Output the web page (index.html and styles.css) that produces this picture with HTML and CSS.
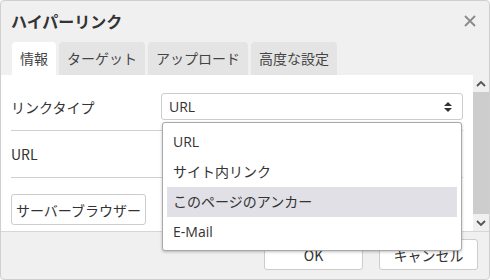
FILE: index.html
```html
<!DOCTYPE html>
<html lang="ja">
<head>
<meta charset="utf-8">
<link rel="stylesheet" href="styles.css">
</head>
<body>
<div class="dialog">
  <div class="header">
    <div class="title">ハイパーリンク</div>
    <svg class="close" width="12" height="12" viewBox="0 0 12 12"><path d="M1 1L11 11M11 1L1 11" stroke="#8a8a8a" stroke-width="1.8" fill="none"/></svg>
  </div>
  <div class="tabs">
    <div class="tab active">情報</div>
    <div class="tab">ターゲット</div>
    <div class="tab">アップロード</div>
    <div class="tab">高度な設定</div>
  </div>
  <div class="body">
    <div class="content">
      <div class="row row-first">
        <div class="label">リンクタイプ</div>
        <div class="select">
          <span>URL</span>
          <svg width="10" height="12" viewBox="0 0 10 12"><path d="M1 5L5 1L9 5Z M1 7L5 11L9 7Z" fill="#333"/></svg>
        </div>
      </div>
      <div class="row row-second">
        <div class="label">URL</div>
      </div>
      <div class="row row-third">
        <div class="btn">サーバーブラウザー</div>
      </div>
    </div>
    <div class="scrollbar">
      <div class="sb-arrow"><svg width="10" height="6" viewBox="0 0 10 6"><path d="M1 5L5 1L9 5" stroke="#555" stroke-width="1.8" fill="none"/></svg></div>
      <div class="sb-thumb"></div>
      <div class="sb-arrow"><svg width="10" height="6" viewBox="0 0 10 6"><path d="M1 1L5 5L9 1" stroke="#555" stroke-width="1.8" fill="none"/></svg></div>
    </div>
  </div>
  <div class="footer">
    <div class="btn fbtn">OK</div>
    <div class="btn fbtn">キャンセル</div>
  </div>
  <div class="dropdown">
    <div class="item">URL</div>
    <div class="item">サイト内リンク</div>
    <div class="item hl">このページのアンカー</div>
    <div class="item">E-Mail</div>
  </div>
</div>
</body>
</html>
```
FILE: styles.css
```css
* { box-sizing: border-box; }
html, body { margin: 0; padding: 0; }
body {
  font-family: "Open Sans", "Noto Sans CJK JP", sans-serif;
  font-size: 14px;
  color: #333;
  width: 490px;
  height: 280px;
  overflow: hidden;
}
.dialog {
  position: relative;
  width: 490px;
  height: 280px;
  background: #f0f0f0;
  border: 1px solid #cfcfcf;
  border-radius: 4px;
  display: flex;
  flex-direction: column;
  overflow: hidden;
}
.header {
  height: 41px;
  display: flex;
  align-items: center;
  justify-content: space-between;
  padding: 0 13px 2px 10px;
}
.title {
  font-weight: bold;
  font-size: 16px;
  color: #333;
  font-family: "Noto Sans CJK JP", sans-serif;
}
.tabs {
  display: flex;
  padding-left: 11px;
  gap: 3px;
  height: 33px;
}
.tab {
  height: 33px;
  line-height: 33px;
  padding: 0 8px;
  background: #e4e4e4;
  border-radius: 4px 4px 0 0;
  font-family: "Noto Sans CJK JP", sans-serif;
  color: #444;
}
.tab.active { background: #fff; padding: 0 8px; }
.body {
  display: flex;
  height: 157px;
  border-bottom: 1px solid #d6d6d6;
}
.content {
  width: 472px;
  background: #fff;
  padding: 0 10px;
  overflow: hidden;
}
.row {
  display: flex;
  align-items: center;
  border-bottom: 1px solid #d0d0d0;
}
.row-first { padding: 18px 0 10px; }
.row-second { height: 47px; }
.row-third { border-bottom: none; padding-top: 16px; }
.label {
  width: 150px;
  font-family: "Noto Sans CJK JP", sans-serif;
  color: #333;
}
.select {
  flex: 1;
  height: 27px;
  border: 1px solid #cccccc;
  border-radius: 3px;
  display: flex;
  align-items: center;
  justify-content: space-between;
  padding: 0 9px 0 7px;
}
.btn {
  height: 31px;
  border: 1px solid #cccccc;
  border-radius: 3px;
  background: #fff;
  display: flex;
  align-items: center;
  justify-content: center;
  padding: 0 4px;
  font-family: "Noto Sans CJK JP", sans-serif;
  color: #333;
}
.scrollbar {
  width: 16px;
  display: flex;
  flex-direction: column;
  background: #f0f0f0;
}
.sb-arrow {
  height: 17px;
  display: flex;
  align-items: center;
  justify-content: center;
}
.sb-thumb { flex: 1; background: #cdcdcd; }
.footer {
  flex: 1;
  display: flex;
  justify-content: flex-end;
  align-items: flex-start;
  gap: 16px;
  padding: 7px 11px 0 0;
}
.fbtn { width: 99px; }
.dropdown {
  position: absolute;
  left: 161px;
  top: 121px;
  width: 300px;
  height: 129px;
  background: #fff;
  border: 1px solid #a9a9a9;
  border-radius: 3px;
  box-shadow: 0 1px 3px rgba(0,0,0,0.25);
  padding: 4px 4px;
  font-family: "Open Sans", "Noto Sans CJK JP", sans-serif;
}
.item {
  height: 30px;
  line-height: 30px;
  padding-left: 6px;
  color: #333;
}
.item.hl { background: #e0e0e6; }
```
